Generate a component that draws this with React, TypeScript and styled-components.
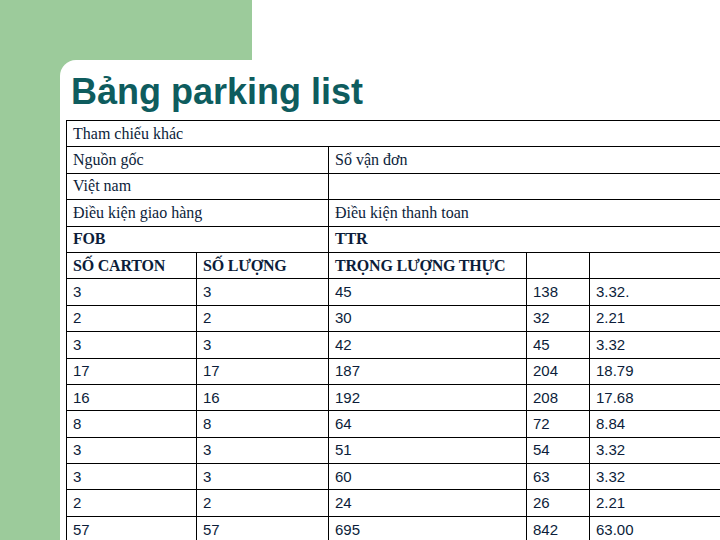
import styled, { createGlobalStyle } from 'styled-components'

const GlobalStyle = createGlobalStyle`
  html, body {
    margin: 0;
    padding: 0;
    background: #9ccb9b;
  }
  #root {
    width: 720px;
    height: 540px;
    overflow: hidden;
  }
`

const Page = styled.div`
  display: flex;
  flex-direction: column;
  width: 720px;
  height: 540px;
  overflow: hidden;
`

const TopBand = styled.div`
  display: flex;
  height: 60px;
  flex-shrink: 0;
`

const GreenBlock = styled.div`
  width: 252px;
  background: #9ccb9b;
`

const TopFill = styled.div`
  flex: 1;
  background: #ffffff;
`

const Body = styled.div`
  flex: 1;
  display: flex;
  padding-left: 60px;
  min-height: 0;
`

const Panel = styled.div`
  flex: 1;
  background: #ffffff;
  border-top-left-radius: 16px;
  overflow: hidden;
  padding-top: 14px;
`

const Title = styled.h1`
  margin: 0 0 10px 11px;
  font-family: 'Liberation Sans', Arial, sans-serif;
  font-weight: bold;
  font-size: 36px;
  line-height: 36px;
  color: #0e5c5e;
  white-space: nowrap;
`

const Sheet = styled.table`
  margin-left: 6px;
  width: 723px;
  table-layout: fixed;
  border-collapse: collapse;
`

const Row = styled.tr`
  height: 26.4px;
`

const Cell = styled.td<{ $sans?: boolean; $bold?: boolean }>`
  border: 1px solid #000000;
  padding: 0 6px;
  vertical-align: middle;
  white-space: nowrap;
  overflow: hidden;
  color: #0c1d3a;
  font-family: ${(p) =>
    p.$sans
      ? "'Liberation Sans', Tahoma, sans-serif"
      : "'Liberation Serif', 'Times New Roman', serif"};
  font-size: ${(p) => (p.$sans ? '15px' : '16px')};
  font-weight: ${(p) => (p.$bold ? 'bold' : 'normal')};
  letter-spacing: ${(p) => (p.$bold ? '-0.2px' : '0')};
  line-height: 18px;
`

const data: string[][] = [
  ['3', '3', '45', '138', '3.32.'],
  ['2', '2', '30', '32', '2.21'],
  ['3', '3', '42', '45', '3.32'],
  ['17', '17', '187', '204', '18.79'],
  ['16', '16', '192', '208', '17.68'],
  ['8', '8', '64', '72', '8.84'],
  ['3', '3', '51', '54', '3.32'],
  ['3', '3', '60', '63', '3.32'],
  ['2', '2', '24', '26', '2.21'],
  ['57', '57', '695', '842', '63.00'],
]

const pairs: [string, string, boolean][] = [
  ['Nguồn gốc', 'Sổ vận đơn', false],
  ['Việt nam', '', false],
  ['Điều kiện giao hàng', 'Điều kiện thanh toan', false],
  ['FOB', 'TTR', true],
]

const App: React.FC = () => {
  return (
    <>
      <GlobalStyle />
      <Page>
        <TopBand>
          <GreenBlock />
          <TopFill />
        </TopBand>
        <Body>
          <Panel>
            <Title>Bảng parking list</Title>
            <Sheet>
              <colgroup>
                <col style={{ width: 130 }} />
                <col style={{ width: 132 }} />
                <col style={{ width: 198 }} />
                <col style={{ width: 63 }} />
                <col style={{ width: 200 }} />
              </colgroup>
              <tbody>
                <Row>
                  <Cell colSpan={5}>Tham chiếu khác</Cell>
                </Row>
                {pairs.map(([left, right, bold]) => (
                  <Row key={left}>
                    <Cell colSpan={2} $bold={bold}>
                      {left}
                    </Cell>
                    <Cell colSpan={3} $bold={bold}>
                      {right}
                    </Cell>
                  </Row>
                ))}
                <Row>
                  <Cell $bold>SỐ CARTON</Cell>
                  <Cell $bold>SỐ LƯỢNG</Cell>
                  <Cell $bold>TRỌNG LƯỢNG THỰC</Cell>
                  <Cell />
                  <Cell />
                </Row>
                {data.map((r, i) => (
                  <Row key={i}>
                    {r.map((v, j) => (
                      <Cell key={j} $sans>
                        {v}
                      </Cell>
                    ))}
                  </Row>
                ))}
              </tbody>
            </Sheet>
          </Panel>
        </Body>
      </Page>
    </>
  )
}

export default App
